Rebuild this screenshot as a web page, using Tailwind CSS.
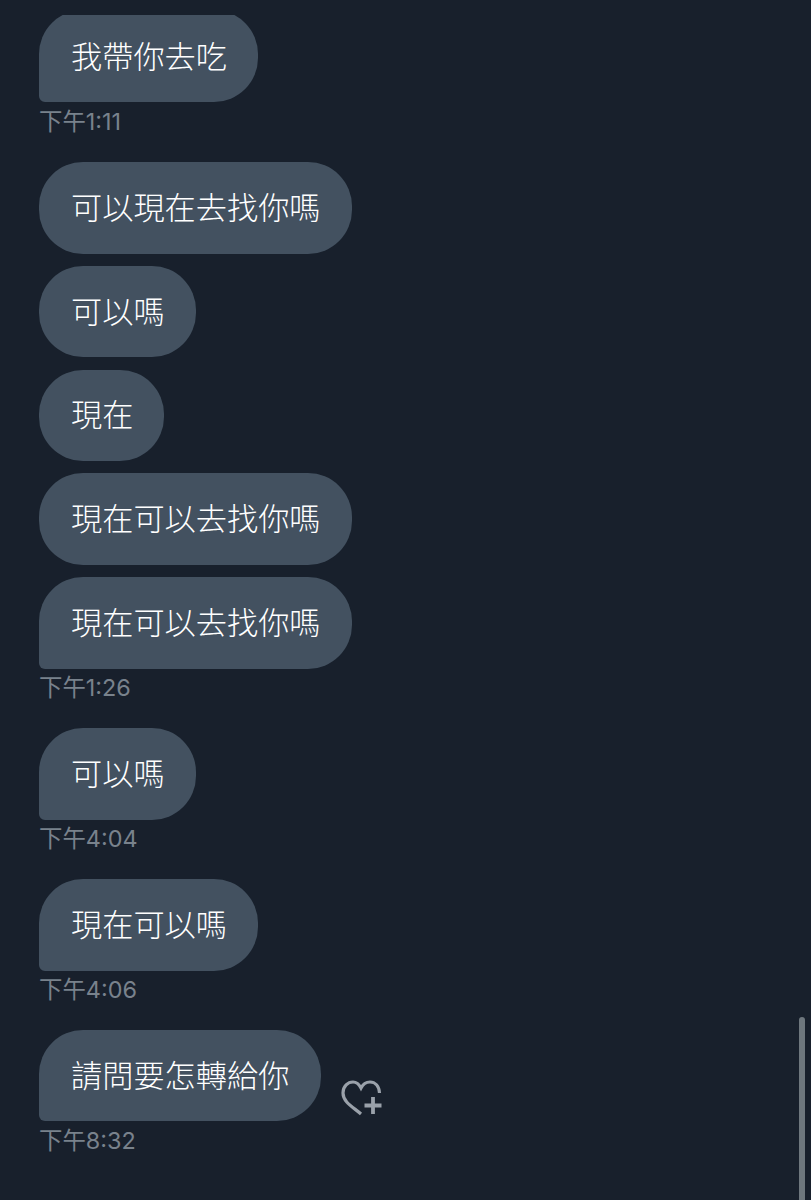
<!DOCTYPE html>
<html lang="zh-Hant">
<head>
    <meta charset="UTF-8">
    <title>Chat</title>
    <script src="https://cdn.jsdelivr.net/npm/@tailwindcss/browser@4"></script>
</head>
<body class="bg-[#18202c]">
    <main class="relative h-[1200px] w-[811px] overflow-hidden bg-[#18202c] pl-[39px] pt-[15px] font-['Inter','Noto_Sans_CJK_TC',sans-serif]">
        <!-- first bubble is cut off by the top of the scroll area -->
        <div class="h-[87px] overflow-hidden">
            <div class="-mt-[4.6px] flex h-[91.6px] w-fit items-center rounded-[44px] rounded-bl-[6px] bg-[#435160] pl-[32px] pr-[31px] pt-[2px] text-[31.2px] font-light text-white">我帶你去吃</div>
        </div>
        <div class="h-[60px] pt-[5.5px] text-[23.4px] leading-[28px] text-[#79828c]">下午1:11</div>

        <div class="flex flex-col items-start gap-[12.2px]">
            <div class="flex h-[91.6px] items-center rounded-[44px] bg-[#435160] pl-[32px] pr-[31px] pt-[1px] text-[31.2px] font-light text-white">可以現在去找你嗎</div>
            <div class="flex h-[91.6px] items-center rounded-[44px] bg-[#435160] pl-[32px] pr-[31px] pt-[1px] text-[31.2px] font-light text-white">可以嗎</div>
            <div class="flex h-[91.6px] items-center rounded-[44px] bg-[#435160] pl-[32px] pr-[31px] pt-[1px] text-[31.2px] font-light text-white">現在</div>
            <div class="flex h-[91.6px] items-center rounded-[44px] bg-[#435160] pl-[32px] pr-[31px] pt-[1px] text-[31.2px] font-light text-white">現在可以去找你嗎</div>
            <div class="flex h-[91.6px] items-center rounded-[44px] rounded-bl-[6px] bg-[#435160] pl-[32px] pr-[31px] pt-[1px] text-[31.2px] font-light text-white">現在可以去找你嗎</div>
        </div>
        <div class="h-[59.3px] pt-[5.5px] text-[23.4px] leading-[28px] text-[#79828c]">下午1:26</div>

        <div class="flex h-[91.6px] w-fit items-center rounded-[44px] rounded-bl-[6px] bg-[#435160] pl-[32px] pr-[31px] pt-[1px] text-[31.2px] font-light text-white">可以嗎</div>
        <div class="h-[59.3px] pt-[5.5px] text-[23.4px] leading-[28px] text-[#79828c]">下午4:04</div>

        <div class="flex h-[91.6px] w-fit items-center rounded-[44px] rounded-bl-[6px] bg-[#435160] pl-[32px] pr-[31px] pt-[1px] text-[31.2px] font-light text-white">現在可以嗎</div>
        <div class="h-[59.3px] pt-[5.5px] text-[23.4px] leading-[28px] text-[#79828c]">下午4:06</div>

        <div class="flex items-end gap-[20px]">
            <div class="flex h-[91.6px] items-center rounded-[44px] rounded-bl-[6px] bg-[#435160] pl-[32px] pr-[32px] pt-[1px] text-[31.2px] font-light text-white">請問要怎轉給你</div>
            <svg class="mb-[5px]" width="41" height="36" viewBox="0 0 41 36" fill="none" stroke="#9aa1aa" stroke-width="3.2">
                <path d="M20 34 C12 27 2 22 2 13 C2 6 7 2 12 2 C15 2 18 4 20 8 C22 4 25 2 29 2 C34 2 38 6 38.5 13"/>
                <path d="M32 17 V34 M23.500 25.500 H40.500" stroke-width="3.800"/>
            </svg>
        </div>
        <div class="pt-[5.5px] text-[23.4px] leading-[28px] text-[#79828c]">下午8:32</div>

        <!-- scrollbar -->
        <div class="absolute left-[799px] top-[1017px] h-[183px] w-[6px] rounded-t-full bg-[#6e777e]"></div>
    </main>
</body>
</html>
